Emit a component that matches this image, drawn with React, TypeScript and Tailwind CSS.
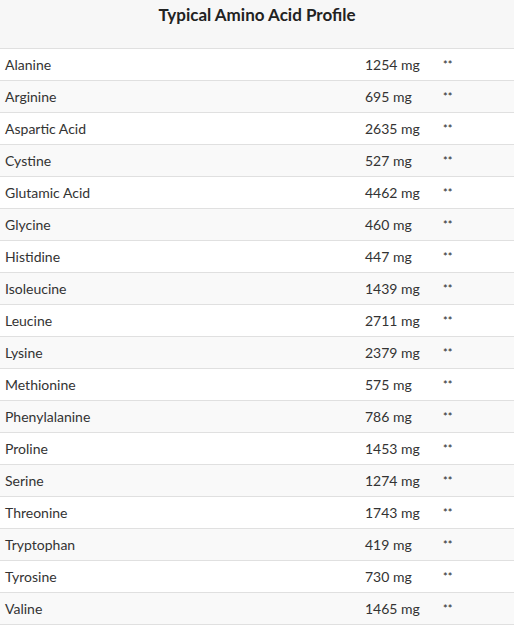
import React from "react";

const rows: [string, string][] = [
  ["Alanine", "1254 mg"],
  ["Arginine", "695 mg"],
  ["Aspartic Acid", "2635 mg"],
  ["Cystine", "527 mg"],
  ["Glutamic Acid", "4462 mg"],
  ["Glycine", "460 mg"],
  ["Histidine", "447 mg"],
  ["Isoleucine", "1439 mg"],
  ["Leucine", "2711 mg"],
  ["Lysine", "2379 mg"],
  ["Methionine", "575 mg"],
  ["Phenylalanine", "786 mg"],
  ["Proline", "1453 mg"],
  ["Serine", "1274 mg"],
  ["Threonine", "1743 mg"],
  ["Tryptophan", "419 mg"],
  ["Tyrosine", "730 mg"],
  ["Valine", "1465 mg"],
];

export default function App() {
  return (
    <div className="w-[514px] bg-white text-[#333333]" style={{ fontFamily: "Lato, 'Open Sans', sans-serif" }}>
      <div className="h-[49px] bg-[#f7f7f7] flex justify-center pt-[3px] border-b border-[#e0e0e0]">
        <span className="text-[17px] font-bold leading-[24px] text-[#222222]">Typical Amino Acid Profile</span>
      </div>
      {rows.map(([name, amt], i) => (
        <div
          key={name}
          className={
            i % 2 === 0
              ? "h-[32px] flex items-center border-b border-[#e0e0e0] bg-white text-[14px]"
              : "h-[32px] flex items-center border-b border-[#e0e0e0] bg-[#f9f9f9] text-[14px]"
          }
        >
          <div className="w-[365px] pl-[5px]">{name}</div>
          <div className="w-[78px]">{amt}</div>
          <div className="flex-1 text-[11px] leading-none -mt-[1px] text-[#222222]">**</div>
        </div>
      ))}
    </div>
  );
}
